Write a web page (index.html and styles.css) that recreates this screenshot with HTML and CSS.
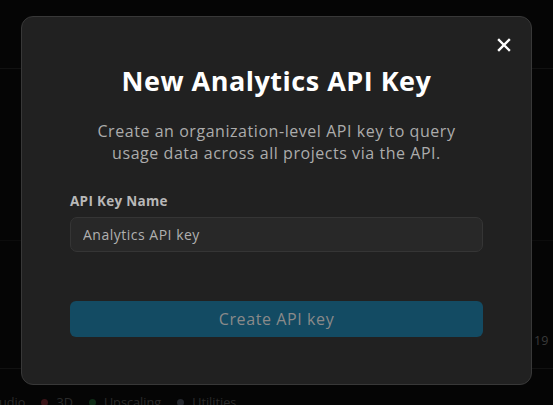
FILE: index.html
```html
<!DOCTYPE html>
<html lang="en">
<head>
<meta charset="utf-8">
<title>New Analytics API Key</title>
<link rel="stylesheet" href="styles.css">
</head>
<body>
  <div class="page">
    <div class="rule rule-top"></div>
    <div class="rule rule-mid"></div>
    <div class="axis-label">19</div>
    <div class="rule rule-bottom"></div>
    <div class="legend">
      <span class="legend-item">Audio</span>
      <span class="legend-item"><i class="dot dot-red"></i>3D</span>
      <span class="legend-item"><i class="dot dot-green"></i>Upscaling</span>
      <span class="legend-item"><i class="dot dot-grey"></i>Utilities</span>
    </div>
  </div>

  <div class="backdrop">
    <div class="modal" role="dialog" aria-labelledby="modal-title">
      <button class="close" type="button" aria-label="Close">
        <svg width="14" height="14" viewBox="0 0 14 14" aria-hidden="true">
          <path d="M2 2 L12 12 M12 2 L2 12" stroke="#fff" stroke-width="2.4" stroke-linecap="square"/>
        </svg>
      </button>
      <h2 id="modal-title" class="title">New Analytics API Key</h2>
      <p class="desc">Create an organization-level API key to query usage data across all projects via the API.</p>
      <label class="label" for="key-name">API Key Name</label>
      <input id="key-name" class="input" type="text" value="Analytics API key">
      <button class="submit" type="button">Create API key</button>
    </div>
  </div>
</body>
</html>
```

FILE: styles.css
```css
html, body {
  margin: 0;
  padding: 0;
}

body {
  width: 553px;
  height: 405px;
  overflow: hidden;
  background: #050505;
  font-family: "Open Sans", "Liberation Sans", sans-serif;
  position: relative;
}

/* dimmed dashboard underneath the dialog */
.page {
  position: relative;
  height: 405px;
}

.rule {
  position: absolute;
  left: 0;
  right: 0;
  height: 1px;
  background: #111;
}

.rule-top { top: 68px; }
.rule-mid { top: 240px; background: #0c0c0c; }
.rule-bottom { top: 368px; }

.axis-label {
  position: absolute;
  left: 534px;
  top: 332px;
  font-size: 12.5px;
  color: #3a3a3a;
}

.legend {
  position: absolute;
  left: -9px;
  top: 393px;
  display: flex;
  gap: 16px;
  font-size: 12.7px;
  color: #2b2b2b;
  white-space: nowrap;
}

.legend-item {
  display: flex;
  align-items: center;
  gap: 8px;
}

.dot {
  width: 7px;
  height: 7px;
  border-radius: 50%;
  display: inline-block;
}

.dot-red { background: #3a1418; }
.dot-green { background: #0f2c16; }
.dot-grey { background: #24272d; }

.backdrop {
  position: absolute;
  inset: 0;
}

.modal {
  position: absolute;
  left: 21px;
  top: 16px;
  width: 511px;
  height: 369px;
  box-sizing: border-box;
  padding: 48px 48px 0;
  background: #212121;
  border: 1px solid #383838;
  border-radius: 12px;
  display: flex;
  flex-direction: column;
}

.close {
  position: absolute;
  top: 21px;
  right: 20px;
  width: 14px;
  height: 14px;
  padding: 0;
  border: 0;
  background: none;
  display: flex;
}

.title {
  margin: 0;
  font-size: 27px;
  line-height: 32px;
  font-weight: 700;
  color: #fff;
  text-align: center;
  letter-spacing: 0.5px;
}

.desc {
  margin: 23px auto 0;
  width: 380px;
  font-size: 16px;
  line-height: 22px;
  letter-spacing: 0.55px;
  color: #acacac;
  text-align: center;
}

.label {
  margin-top: 27px;
  font-size: 13.5px;
  line-height: 20px;
  font-weight: 700;
  letter-spacing: 0.3px;
  color: #b8b8b8;
}

.input {
  margin-top: 6px;
  height: 35px;
  box-sizing: border-box;
  padding: 0 12px;
  background: #282828;
  border: 1px solid #353535;
  border-radius: 7px;
  font-family: inherit;
  font-size: 14px;
  letter-spacing: 0.5px;
  color: #b0b0b0;
  outline: none;
}

.submit {
  margin-top: 49px;
  height: 36px;
  border: 0;
  border-radius: 6px;
  background: #134b63;
  font-family: inherit;
  font-size: 16px;
  letter-spacing: 0.6px;
  color: #8a8a8a;
}
```
